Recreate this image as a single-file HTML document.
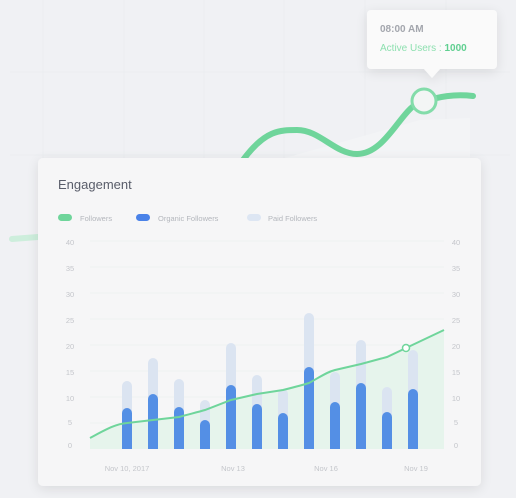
<!DOCTYPE html>
<html><head><meta charset="utf-8"><style>
html,body{margin:0;padding:0;width:516px;height:498px;overflow:hidden;background:#f0f1f4;font-family:"Liberation Sans",sans-serif}
</style></head><body>
<svg width="516" height="498" viewBox="0 0 516 498" xmlns="http://www.w3.org/2000/svg" style="position:absolute;left:0;top:0">
<defs>
<filter id="sh" x="-20%" y="-20%" width="140%" height="140%"><feGaussianBlur in="SourceAlpha" stdDeviation="6"/><feOffset dy="3"/><feComponentTransfer><feFuncA type="linear" slope="0.10"/></feComponentTransfer><feMerge><feMergeNode/><feMergeNode in="SourceGraphic"/></feMerge></filter>
</defs>
<g stroke="#ebedf0" stroke-width="1">
<line x1="43" y1="0" x2="43" y2="250"/><line x1="124" y1="0" x2="124" y2="160"/><line x1="204" y1="0" x2="204" y2="160"/><line x1="284" y1="0" x2="284" y2="160"/><line x1="365" y1="0" x2="365" y2="160"/><line x1="446" y1="0" x2="446" y2="160"/>
<line x1="10" y1="72" x2="510" y2="72"/><line x1="10" y1="155" x2="510" y2="155"/>
</g>
<path d="M285 158 L420 120 L470 118 L470 158 Z" fill="#f3f4f6"/>
<path d="M243 160 C265 130 280 130 297 130 C320 130 335 154 357 154 C385 154 400 112 418 103 C440 96 455 94 473 96" fill="none" stroke="#6fd59b" stroke-width="6" stroke-linecap="round"/>
<circle cx="424" cy="101" r="12" fill="#f3f5f5" stroke="#83dcaa" stroke-width="3"/>
<line x1="12" y1="239" x2="38" y2="237" stroke="#cdeedc" stroke-width="6" stroke-linecap="round"/>
<g filter="url(#sh)">
<rect x="367" y="10" width="130" height="59" rx="4" fill="#fafafa"/>
<path d="M424 69 L432 78 L440 69 Z" fill="#fafafa"/>
</g>
<text x="380" y="32" font-size="10" font-weight="bold" fill="#a3a6ad">08:00 AM</text>
<text x="380" y="51" font-size="10" fill="#8ee0b0">Active Users : <tspan font-weight="bold" fill="#5fcf90">1000</tspan></text>
<g filter="url(#sh)"><rect x="38" y="158" width="443" height="328" rx="5" fill="#f6f6f7"/></g>
<text x="58" y="189" font-size="13" fill="#595d6a">Engagement</text>
<rect x="58" y="214" width="14" height="7" rx="3.5" fill="#6fd59b"/>
<text x="80" y="221" font-size="7.5" fill="#b4b7bd">Followers</text>
<rect x="136" y="214" width="14" height="7" rx="3.5" fill="#4a82e8"/>
<text x="158" y="221" font-size="7.5" fill="#b4b7bd">Organic Followers</text>
<rect x="247" y="214" width="14" height="7" rx="3.5" fill="#dde6f3"/>
<text x="268" y="221" font-size="7.5" fill="#b4b7bd">Paid Followers</text>
<g stroke="#eef3f0" stroke-width="1">
<line x1="90" y1="241" x2="444" y2="241"/><line x1="90" y1="267" x2="444" y2="267"/><line x1="90" y1="293" x2="444" y2="293"/><line x1="90" y1="319" x2="444" y2="319"/><line x1="90" y1="345" x2="444" y2="345"/><line x1="90" y1="371" x2="444" y2="371"/><line x1="90" y1="397" x2="444" y2="397"/><line x1="90" y1="423" x2="444" y2="423"/>
</g>
<g font-size="7.5" fill="#c4c6cb" text-anchor="middle">
<text x="70" y="245">40</text><text x="70" y="271">35</text><text x="70" y="297">30</text><text x="70" y="323">25</text><text x="70" y="349">20</text><text x="70" y="375">15</text><text x="70" y="401">10</text><text x="70" y="425">5</text><text x="70" y="448">0</text>
<text x="456" y="245">40</text><text x="456" y="271">35</text><text x="456" y="297">30</text><text x="456" y="323">25</text><text x="456" y="349">20</text><text x="456" y="375">15</text><text x="456" y="401">10</text><text x="456" y="425">5</text><text x="456" y="448">0</text>
<text x="127" y="471">Nov 10, 2017</text><text x="233" y="471">Nov 13</text><text x="326" y="471">Nov 16</text><text x="416" y="471">Nov 19</text>
</g>
<path d="M90 438 C105 430 115 424 127 423 L153 420 L179 417 C190 414 198 412 205 410 L231 400 L257 394 L283 390 C295 387 303 385 309 383 C320 377 327 372 335 370 L361 364 L387 357 L406 348 L444 330 L444 449 L90 449 Z" fill="#e6f4ec"/>
<g stroke-width="10">
<g stroke="#dbe4f1">
<path d="M127 449 V386 M153 449 V363 M179 449 V384 M205 449 V405 M231 449 V348 M257 449 V380 M283 449 V394 M309 449 V318 M335 449 V377 M361 449 V345 M387 449 V392 M413 449 V355"/>
</g>
<g stroke="#548fe5">
<path d="M127 449 V413 M153 449 V399 M179 449 V412 M205 449 V425 M231 449 V390 M257 449 V409 M283 449 V418 M309 449 V372 M335 449 V407 M361 449 V388 M387 449 V417 M413 449 V394"/>
</g>
</g>
<g fill="#dbe4f1">
<circle cx="127" cy="386" r="5"/><circle cx="153" cy="363" r="5"/><circle cx="179" cy="384" r="5"/><circle cx="205" cy="405" r="5"/><circle cx="231" cy="348" r="5"/><circle cx="257" cy="380" r="5"/><circle cx="283" cy="394" r="5"/><circle cx="309" cy="318" r="5"/><circle cx="335" cy="377" r="5"/><circle cx="361" cy="345" r="5"/><circle cx="387" cy="392" r="5"/><circle cx="413" cy="355" r="5"/>
</g>
<g fill="#548fe5">
<circle cx="127" cy="413" r="5"/><circle cx="153" cy="399" r="5"/><circle cx="179" cy="412" r="5"/><circle cx="205" cy="425" r="5"/><circle cx="231" cy="390" r="5"/><circle cx="257" cy="409" r="5"/><circle cx="283" cy="418" r="5"/><circle cx="309" cy="372" r="5"/><circle cx="335" cy="407" r="5"/><circle cx="361" cy="388" r="5"/><circle cx="387" cy="417" r="5"/><circle cx="413" cy="394" r="5"/>
</g>
<path d="M90 438 C105 430 115 424 127 423 L153 420 L179 417 C190 414 198 412 205 410 L231 400 L257 394 L283 390 C295 387 303 385 309 383 C320 377 327 372 335 370 L361 364 L387 357 L406 348 L444 330" fill="none" stroke="#6fd59b" stroke-width="2"/>
<circle cx="406" cy="348" r="3.5" fill="#fff" stroke="#6fd59b" stroke-width="1.5"/>
</svg>
</body></html>
